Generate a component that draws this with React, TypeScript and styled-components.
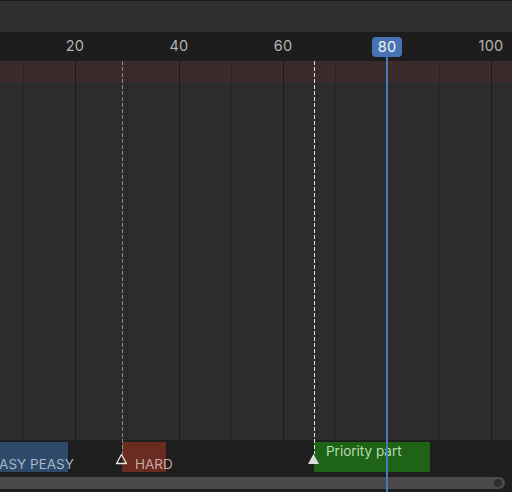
import React from 'react';
import styled, { createGlobalStyle } from 'styled-components';

const PX0 = -29;
const PPF = 5.2;
const fx = (f: number) => PX0 + f * PPF;

const Global = createGlobalStyle`
  html, body { margin: 0; padding: 0; background: #1d1d1d; }
  body { font-family: Inter, "DejaVu Sans", sans-serif; }
`;

const Root = styled.div`
  position: relative;
  width: 512px;
  height: 492px;
  overflow: hidden;
  display: flex;
  flex-direction: column;
  background: #1d1d1d;
`;

const Header = styled.div`
  height: 31px;
  flex: none;
  border-top: 1px solid #1c1c1c;
  background: #303030;
`;

const Ruler = styled.div`
  position: relative;
  height: 29px;
  flex: none;
  background: #1d1d1d;
`;

const RulerLabel = styled.span<{ $x: number }>`
  position: absolute;
  top: 5px;
  left: ${(p) => p.$x}px;
  transform: translateX(-50%);
  font-size: 14.5px;
  line-height: 18px;
  color: #b4b4b4;
  letter-spacing: 0.3px;
`;

const Channels = styled.div`
  position: relative;
  flex: 1;
  display: flex;
  flex-direction: column;
`;

const RangeBand = styled.div`
  height: 21px;
  flex: none;
  background: #3b2b2b;
`;

const MainArea = styled.div`
  flex: 1;
  background: #2c2c2c;
`;

const GridLine = styled.div<{ $x: number; $major: boolean }>`
  position: absolute;
  top: 0;
  bottom: 0;
  left: ${(p) => p.$x}px;
  width: 1px;
  background: ${(p) => (p.$major ? '#1b1b1b' : 'rgba(0,0,0,0.14)')};
`;

const MarkerRow = styled.div`
  position: relative;
  height: 37px;
  flex: none;
  background: #1e1e1e;
`;

const Strip = styled.div<{ $x: number; $w: number; $bg: string; $fg: string; $align: 'top' | 'bottom' }>`
  position: absolute;
  top: 2px;
  height: 30px;
  left: ${(p) => p.$x}px;
  width: ${(p) => p.$w}px;
  background: ${(p) => p.$bg};
  color: ${(p) => p.$fg};
  font-size: 13.5px;
  line-height: 16px;
  white-space: nowrap;
  display: flex;
  align-items: ${(p) => (p.$align === 'top' ? 'flex-start' : 'flex-end')};
  box-sizing: border-box;
  padding: ${(p) => (p.$align === 'top' ? '1px 0 0 0' : '0')};
`;

const StripText = styled.span<{ $dx: number }>`
  margin-left: ${(p) => p.$dx}px;
`;

const ScrollTrack = styled.div`
  height: 15px;
  flex: none;
  background: #1e1e1e;
  display: flex;
  align-items: flex-start;
  padding-right: 7px;
`;

const ScrollThumb = styled.div`
  flex: 1;
  height: 12px;
  margin-left: -8px;
  border-radius: 6px;
  background: #4a4a4a;
  display: flex;
  align-items: center;
  justify-content: flex-end;
  padding-right: 3px;
`;

const ScrollDot = styled.div`
  width: 8px;
  height: 8px;
  border-radius: 50%;
  background: #2e2e2e;
`;

const DashedLine = styled.div<{ $x: number; $color: string }>`
  position: absolute;
  top: 61px;
  height: 393px;
  left: ${(p) => p.$x}px;
  width: 1px;
  background-image: linear-gradient(${(p) => p.$color} 60%, transparent 60%);
  background-size: 1px 6px;
`;

const MarkerIcon = styled.svg<{ $x: number }>`
  position: absolute;
  top: 453px;
  left: ${(p) => p.$x - 6}px;
`;

const Playhead = styled.div`
  position: absolute;
  top: 57px;
  bottom: 0;
  left: 386px;
  width: 2px;
  background: #4a78bd;
`;

const PlayheadBadge = styled.div`
  position: absolute;
  top: 37px;
  left: 372px;
  width: 30px;
  height: 20px;
  border-radius: 4px;
  background: #4772b3;
  color: #f2f2f2;
  font-size: 14.5px;
  line-height: 20px;
  text-align: center;
  letter-spacing: 0.3px;
`;

const labels = [20, 40, 60, 100];
const gridFrames = [10, 20, 30, 40, 50, 60, 70, 80, 90, 100];

export default function App() {
  return (
    <Root>
      <Global />
      <Header />
      <Ruler>
        {labels.map((f) => (
          <RulerLabel key={f} $x={fx(f)}>
            {f}
          </RulerLabel>
        ))}
      </Ruler>
      <Channels>
        <RangeBand />
        <MainArea />
        {gridFrames.map((f) => (
          <GridLine key={f} $x={Math.round(fx(f))} $major={f % 20 === 0} />
        ))}
      </Channels>
      <MarkerRow>
        <Strip $x={-60} $w={128} $bg="#2d4a6a" $fg="#a8b7c8" $align="bottom">
          <StripText $dx={51}>EASY PEASY</StripText>
        </Strip>
        <Strip $x={122} $w={44} $bg="#6a2b21" $fg="#c9a8a3" $align="bottom">
          <StripText $dx={13}>HARD</StripText>
        </Strip>
        <Strip $x={314} $w={116} $bg="#1e6316" $fg="#b8ddb0" $align="top">
          <StripText $dx={12}>Priority part</StripText>
        </Strip>
      </MarkerRow>
      <ScrollTrack>
        <ScrollThumb>
          <ScrollDot />
        </ScrollThumb>
      </ScrollTrack>
      <DashedLine $x={122} $color="#8c8c8c" />
      <DashedLine $x={314} $color="#e6e6e6" />
      <MarkerIcon $x={121} width="13" height="12" viewBox="0 0 13 12">
        <path d="M6.5 1.5 L11.5 10.5 L1.5 10.5 Z" fill="none" stroke="#e6e6e6" strokeWidth="1.3" strokeLinejoin="round" />
      </MarkerIcon>
      <MarkerIcon $x={313} width="13" height="12" viewBox="0 0 13 12">
        <path d="M6.5 1 L12 11 L1 11 Z" fill="#d9d9d9" />
      </MarkerIcon>
      <Playhead />
      <PlayheadBadge>80</PlayheadBadge>
    </Root>
  );
}
